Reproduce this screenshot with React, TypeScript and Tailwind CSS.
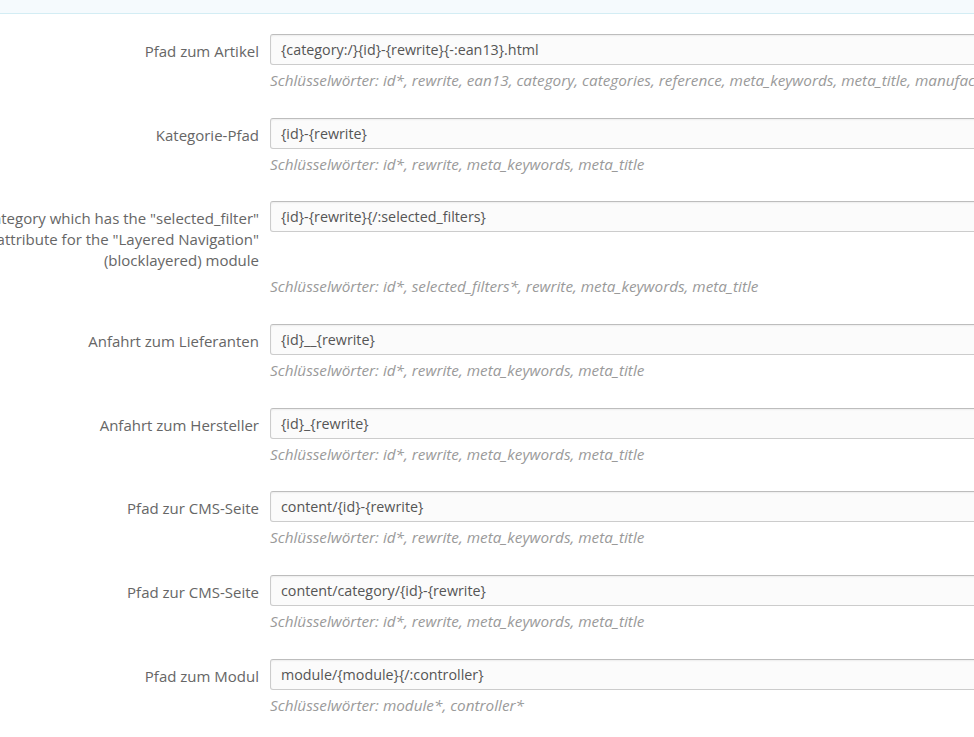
const rows: { label: string[]; value: string; help: string }[] = [
  {
    label: ["Pfad zum Artikel"],
    value: "{category:/}{id}-{rewrite}{-:ean13}.html",
    help: "Schlüsselwörter: id*, rewrite, ean13, category, categories, reference, meta_keywords, meta_title, manufacturer, supplier, price, tags",
  },
  {
    label: ["Kategorie-Pfad"],
    value: "{id}-{rewrite}",
    help: "Schlüsselwörter: id*, rewrite, meta_keywords, meta_title",
  },
  {
    label: [
      "Route to category which has the \"selected_filter\"",
      "attribute for the \"Layered Navigation\"",
      "(blocklayered) module",
    ],
    value: "{id}-{rewrite}{/:selected_filters}",
    help: "Schlüsselwörter: id*, selected_filters*, rewrite, meta_keywords, meta_title",
  },
  {
    label: ["Anfahrt zum Lieferanten"],
    value: "{id}__{rewrite}",
    help: "Schlüsselwörter: id*, rewrite, meta_keywords, meta_title",
  },
  {
    label: ["Anfahrt zum Hersteller"],
    value: "{id}_{rewrite}",
    help: "Schlüsselwörter: id*, rewrite, meta_keywords, meta_title",
  },
  {
    label: ["Pfad zur CMS-Seite"],
    value: "content/{id}-{rewrite}",
    help: "Schlüsselwörter: id*, rewrite, meta_keywords, meta_title",
  },
  {
    label: ["Pfad zur CMS-Seite"],
    value: "content/category/{id}-{rewrite}",
    help: "Schlüsselwörter: id*, rewrite, meta_keywords, meta_title",
  },
  {
    label: ["Pfad zum Modul"],
    value: "module/{module}{/:controller}",
    help: "Schlüsselwörter: module*, controller*",
  },
];

export default function App() {
  return (
    <div className="min-h-screen bg-white overflow-hidden font-['Open_Sans',sans-serif]">
      <div className="h-[14px] bg-[#f5fafd] border-b border-[#d3edf4]" />

      <div className="pt-[20px] w-[1400px]">
        {rows.map((row, i) => (
          <div key={i} className="mb-[28.7px]">
            <div className="flex">
              <div className="w-[259px] shrink-0 flex justify-end">
                <label className="pt-[7px] text-[15px] leading-[21px] text-[#666] text-right whitespace-nowrap">
                  {row.label.map((l, j) => (
                    <div key={j}>{l}</div>
                  ))}
                </label>
              </div>
              <div className="ml-[11px] flex-1">
                <input
                  readOnly
                  value={row.value}
                  className="w-full h-[31px] px-[10px] text-[14.3px] text-[#555] bg-[#fbfbfb] border border-[#ccc] border-t-[#bdbdbd] rounded-[3px] shadow-[inset_0_1px_2px_rgba(0,0,0,0.06)] outline-none font-['Open_Sans',sans-serif]"
                />
              </div>
            </div>
            <p className="pl-[270px] mt-[6px] text-[15.3px] leading-[18px] italic text-[#9a9a9a] whitespace-nowrap">
              {row.help}
            </p>
          </div>
        ))}
      </div>
    </div>
  );
}
